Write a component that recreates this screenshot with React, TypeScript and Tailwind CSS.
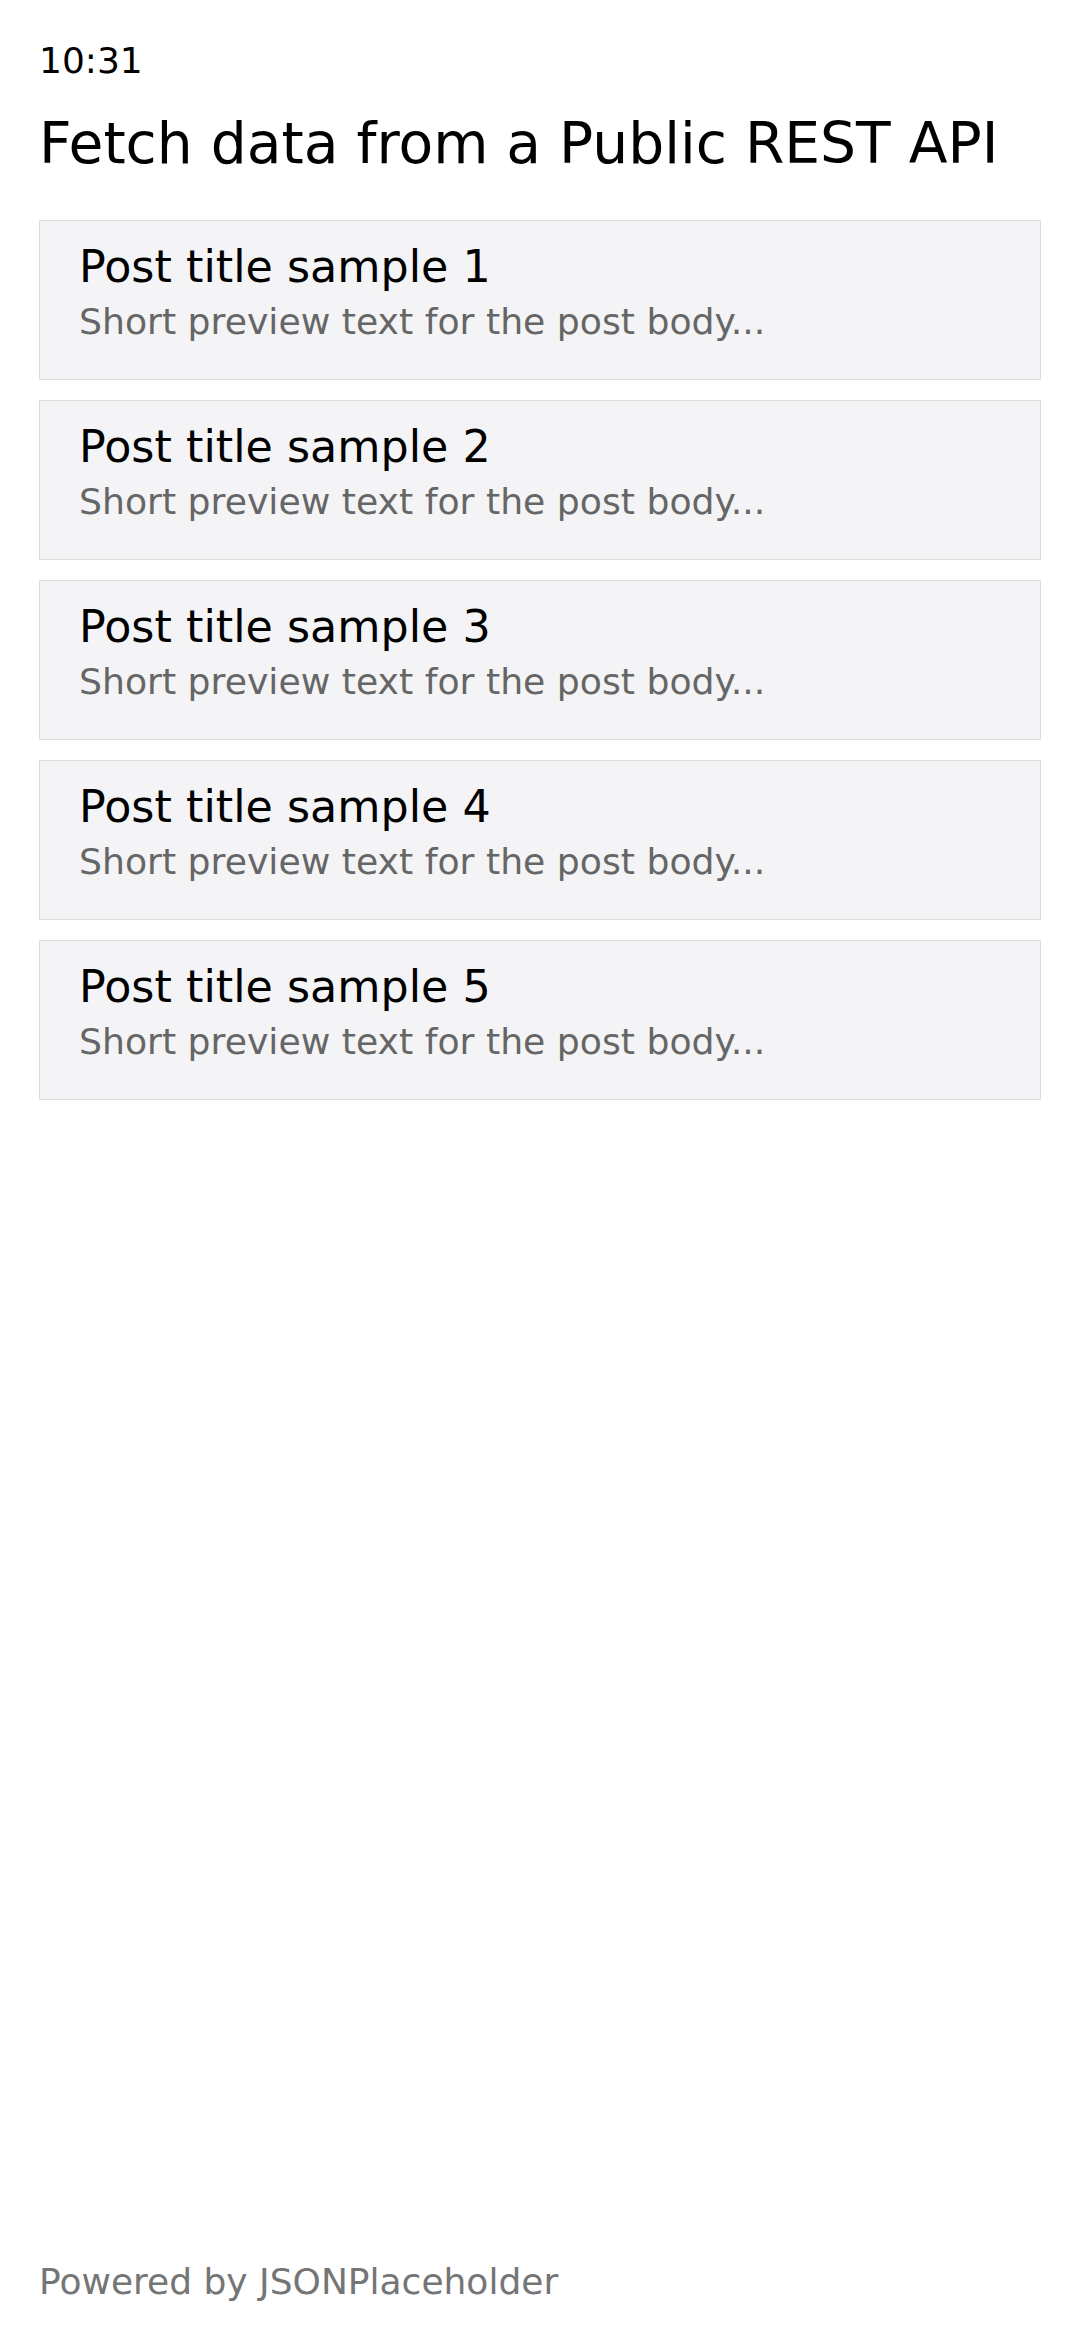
const posts = [1, 2, 3, 4, 5].map((id) => ({
  id,
  title: `Post title sample ${id}`,
  body: "Short preview text for the post body...",
}));

function PostCard({ title, body }: { title: string; body: string }) {
  return (
    <article className="border border-[#dcdcdc] bg-[#f4f4f6] h-[160px] px-[39px] pt-[20px]">
      <p className="text-[44.4px] leading-[52px] text-black">{title}</p>
      <p className="mt-[7px] text-[36.2px] leading-[44px] text-[#666666]">
        {body}
      </p>
    </article>
  );
}

function App() {
  return (
    <div className="flex min-h-screen flex-col bg-white px-[39px] pt-[39px] pb-[36px] font-['DejaVu_Sans',sans-serif]">
      <p className="text-[36px] leading-[44px] text-black">10:31</p>
      <h1 className="mt-[27px] text-[56.7px] leading-[66px] font-normal text-black">
        Fetch data from a Public REST API
      </h1>

      <div className="mt-[44px] flex flex-col gap-[20px]">
        {posts.map((post) => (
          <PostCard key={post.id} title={post.title} body={post.body} />
        ))}
      </div>

      <p className="mt-auto text-[36px] leading-[44px] text-[#757575]">
        Powered by JSONPlaceholder
      </p>
    </div>
  );
}

export default App;
